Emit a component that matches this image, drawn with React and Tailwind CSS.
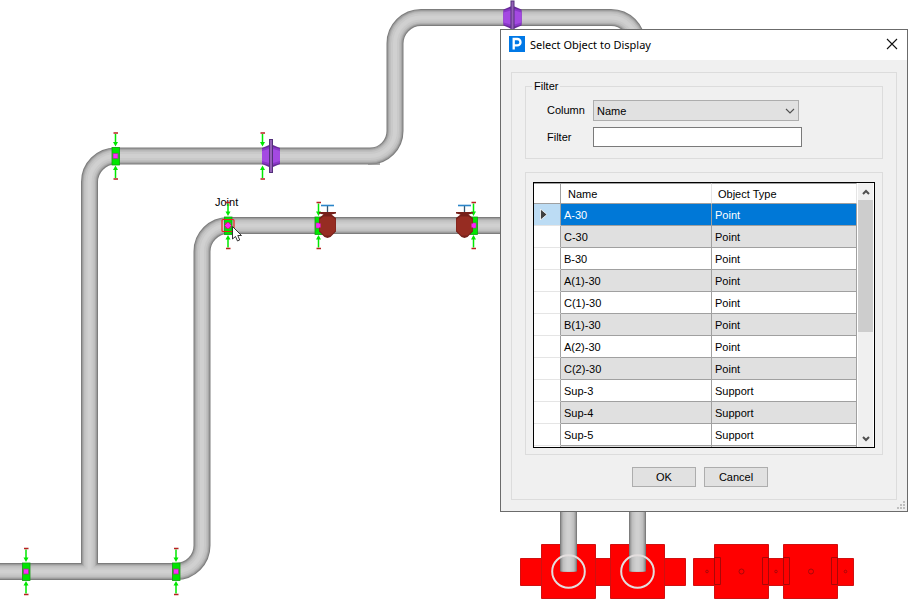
import React from "react";

const pipes = [
  "M89.5 571.5 V182 A26 26 0 0 1 115.5 156 H370 A25 25 0 0 0 395 131 V43.5 A26 26 0 0 1 421 17.5 H611 A26 26 0 0 1 637 43.5",
  "M-2 571.5 H176 A26 26 0 0 0 202 545.5 V251.5 A26 26 0 0 1 228 225.5 H520",
  "M568.5 500 V571.5",
  "M637.5 500 V571.5",
];

const shades = [
  { width: 17, color: "#7d7d7d" },
  { width: 15, color: "#9c9c9c" },
  { width: 13, color: "#b0b0b0" },
  { width: 11, color: "#bfbfbf" },
  { width: 8, color: "#c9c9c9" },
  { width: 4, color: "#d0d0d0" },
];

function Arrows({ x, y }) {
  return (
    <g transform={`translate(${x} ${y})`}>
      <path d="M0 -22 V-12 M0 22 V12" stroke="#00e800" strokeWidth="1.5" />
      <path d="M-2.5 -14 H2.5 L0 -9.5 Z M-2.5 14 H2.5 L0 9.5 Z" fill="#00e800" />
      <path d="M-2 -23 H2.5 M-2 23 H2.5" stroke="#b82020" strokeWidth="1.3" />
    </g>
  );
}

function Clamp({ x, y }) {
  return (
    <g>
      <Arrows x={x} y={y} />
      <g transform={`translate(${x} ${y})`}>
        <rect x="-3.5" y="-8.5" width="7.5" height="17.5" fill="#00e600" stroke="#10a010" strokeWidth="0.8" />
        <rect x="-2.5" y="-2.5" width="5" height="5" fill="#ff2aff" stroke="#8d4a7d" strokeWidth="0.8" />
      </g>
    </g>
  );
}

function Flange({ x, y }) {
  return (
    <g transform={`translate(${x} ${y})`}>
      <path d="M-9 -8 L-2 -11 H2 L9 -8 V8 L2 11 H-2 L-9 8 Z" fill="#6a2a9c" />
      <path d="M-9 -7 L-2 -9 H2 L9 -7 V7 L2 9 H-2 L-9 7 Z" fill="#8a38c8" />
      <path d="M-9 -5 L-2 -7 H2 L9 -5 V5 L2 7 H-2 L-9 5 Z" fill="#a449e2" />
      <rect x="-1.5" y="-16.5" width="3" height="33" fill="#9560b8" stroke="#53307a" strokeWidth="1" />
    </g>
  );
}

function Valve({ x, y }) {
  return (
    <g transform={`translate(${x} ${y})`}>
      <path d="M0 -20 V-12" stroke="#35556d" strokeWidth="1.3" />
      <path d="M-6.5 -20 H6.5" stroke="#2b85c9" strokeWidth="1.6" />
      <path d="M-8.5 -13.5 H8.5 V-12 L4 -11 L8.5 -7.5 V6 L3 11.5 L0 12.5 L-3 11.5 L-8.5 6 V-7.5 L-4 -11 L-8.5 -12 Z" fill="#76201a" />
      <path d="M-8 -6 L-4 -9 H4 L8 -6 V5 L3 10 H-3 L-8 5 Z" fill="#962c22" />
    </g>
  );
}

function Drawing() {
  return (
    <svg className="absolute inset-0 h-full w-full" aria-hidden="true" fill="none">
      <g fill="#ff0000" stroke="#d01010" strokeWidth="1">
        <path d="M520.5 558.5 h21 v27 h-21 Z M595.5 558.5 h16 v27 h-16 Z M664.5 558.5 h21 v27 h-21 Z" />
        <path d="M541.5 544.5 h54 v54 h-54 Z M610.5 544.5 h54 v54 h-54 Z" />
        <path d="M693.5 558.5 h21 v27 h-21 Z M768.5 558.5 h16 v27 h-16 Z M837.5 558.5 h16 v27 h-16 Z" />
        <path d="M714.5 544.5 h54 v54 h-54 Z M783.5 544.5 h54 v54 h-54 Z" />
        <path d="M714.5 557.5 h6 v27 h-6 Z M762.5 557.5 h6 v27 h-6 Z M783.5 557.5 h6 v27 h-6 Z M831.5 557.5 h6 v27 h-6 Z" stroke="#a80808" />
        <g stroke="#a80808">
          <circle cx="741.5" cy="571.5" r="2.5" />
          <circle cx="811" cy="571.5" r="2.5" />
          <circle cx="707" cy="571.5" r="1.3" />
          <circle cx="776" cy="571.5" r="1.3" />
          <circle cx="845.5" cy="571.5" r="1.3" />
        </g>
      </g>
      {shades.map((s) => (
        <g key={s.width} stroke={s.color} strokeWidth={s.width}>
          {pipes.map((d) => (
            <path key={d} d={d} />
          ))}
        </g>
      ))}
      <path d="M368 164 H380" stroke="#8c8c8c" strokeWidth="1.5" />
      <circle cx="568.5" cy="571.5" r="16.3" stroke="#e3dede" strokeWidth="2" />
      <circle cx="637.5" cy="571.5" r="16.3" stroke="#e3dede" strokeWidth="2" />
      <Flange x={512.5} y={17.5} />
      <Arrows x={262.5} y={156} />
      <Flange x={271} y={156} />
      <Clamp x={115.5} y={156} />
      <Clamp x={26} y={571.5} />
      <Clamp x={176} y={571.5} />
      <Clamp x={318.5} y={225.5} />
      <Valve x={327.5} y={225.5} />
      <Clamp x={473.5} y={225.5} />
      <Valve x={464.5} y={225.5} />
      <rect x="316.5" y="223.5" width="4" height="4" fill="#ff20ff" />
      <rect x="471.5" y="223.5" width="4" height="4" fill="#ff20ff" />
      <text x="215" y="206" fill="#000000" className="font-['Liberation_Sans',Arial,sans-serif] text-[11px]">
        Joint
      </text>
      <Clamp x={228} y={225.5} />
      <path d="M228 222 L231.5 225.5 L228 229 L224.5 225.5 Z" fill="#ff20ff" stroke="#e01818" strokeWidth="0.6" />
      <rect x="222" y="219.5" width="12" height="12" rx="1" stroke="#e82020" strokeWidth="1.2" />
      <path d="M232.5 226.5 V239 L235.5 236.5 L237.5 241 L239.7 240 L237.8 235.5 H241.5 Z" fill="#ffffff" stroke="#222222" strokeWidth="0.9" />
    </svg>
  );
}

const rows = [
  ["A-30", "Point"],
  ["C-30", "Point"],
  ["B-30", "Point"],
  ["A(1)-30", "Point"],
  ["C(1)-30", "Point"],
  ["B(1)-30", "Point"],
  ["A(2)-30", "Point"],
  ["C(2)-30", "Point"],
  ["Sup-3", "Support"],
  ["Sup-4", "Support"],
  ["Sup-5", "Support"],
];

function rowColor(i) {
  if (i === 0) return "bg-[#0078d7] text-white";
  return i % 2 ? "bg-[#e0e0e0]" : "bg-white";
}

function ObjectTable() {
  return (
    <div className="flex h-[266px] overflow-hidden border border-black bg-white">
      <div className="min-w-0 flex-1 overflow-hidden">
        <table className="w-full table-fixed border-separate border-spacing-0 text-left">
          <colgroup>
            <col className="w-[27px]" />
            <col className="w-[151px]" />
            <col />
          </colgroup>
          <thead>
            <tr className="h-[21px]">
              <th className="border-t border-r border-b border-[#a0a0a0] p-0" aria-label="Current row" />
              <th className="border-t border-r border-b border-[#a0a0a0] border-r-[#e5e5e5] p-0 pt-[2px] pl-[7px] font-normal">Name</th>
              <th className="border-t border-r border-b border-[#a0a0a0] border-r-[#e5e5e5] p-0 pt-[2px] pl-[6px] font-normal">Object Type</th>
            </tr>
          </thead>
          <tbody>
            {rows.map(([name, type], i) => (
              <tr key={name} className="h-[22px]">
                <td className={`border-r border-b border-r-[#a0a0a0] border-b-[#e5e5e5] p-0 pl-[6px] ${i === 0 ? "bg-[#bcdcf4]" : "bg-white"}`}>
                  {i === 0 && (
                    <svg className="block" width="8" height="11" viewBox="0 0 8 11" aria-hidden="true">
                      <path d="M0.5 0 L7 5.5 L0.5 11 Z" fill="#404040" stroke="#ffffff" strokeWidth="0.8" />
                    </svg>
                  )}
                </td>
                <td className={`border-r border-b border-[#a0a0a0] p-0 pt-[2px] pl-[3px] ${rowColor(i)}`}>{name}</td>
                <td className={`border-r border-b border-[#a0a0a0] p-0 pt-[2px] pl-[3px] ${rowColor(i)}`}>{type}</td>
              </tr>
            ))}
            <tr className="h-[22px]">
              <td className="border-r border-[#a0a0a0] bg-white p-0" />
              <td className="border-r border-[#a0a0a0] bg-[#e0e0e0] p-0" />
              <td className="border-r border-[#a0a0a0] bg-[#e0e0e0] p-0" />
            </tr>
          </tbody>
        </table>
      </div>
      <div className="mr-px ml-px flex w-[15px] flex-col bg-[#f0f0f0]">
        <button type="button" aria-label="Scroll up" className="flex h-[17px] items-center justify-center">
          <svg width="8" height="6" viewBox="0 0 8 6" fill="none">
            <path d="M1 5 L4 2 L7 5" stroke="#505050" strokeWidth="2" />
          </svg>
        </button>
        <div className="h-[132px] bg-[#cdcdcd]" />
        <div className="flex-1" />
        <button type="button" aria-label="Scroll down" className="flex h-[17px] items-center justify-center">
          <svg width="8" height="6" viewBox="0 0 8 6" fill="none">
            <path d="M1 1 L4 4 L7 1" stroke="#505050" strokeWidth="2" />
          </svg>
        </button>
      </div>
    </div>
  );
}

function SelectDialog() {
  return (
    <section
      role="dialog"
      aria-labelledby="dialog-title"
      className="absolute top-[29px] left-[500px] w-[408px] border border-[#6b6b6b] bg-[#f0f0f0] font-['Liberation_Sans',Arial,sans-serif] text-[11px] leading-[13px] text-black"
    >
      <header className="flex h-[30px] items-center bg-white pr-[9px] pb-[2px] pl-2">
        <svg width="16" height="16" viewBox="0 0 16 16" aria-hidden="true">
          <rect width="16" height="16" fill="#0078e6" />
          <path d="M4.7 13.5 V3 H8.3 A3.2 3.2 0 0 1 8.3 9.4 H4.7" fill="none" stroke="#ffffff" strokeWidth="2.3" />
        </svg>
        <h1 id="dialog-title" className="ml-[5px] flex-1 font-['Noto_Sans','Open_Sans',sans-serif] text-[11px]">
          Select Object to Display
        </h1>
        <button type="button" aria-label="Close">
          <svg width="12" height="12" viewBox="0 0 12 12">
            <path d="M1 1 L11 11 M11 1 L1 11" stroke="#111111" strokeWidth="1.1" />
          </svg>
        </button>
      </header>
      <div className="px-[10px] pt-3 pb-[11px]">
        <div className="border border-[#dcdcdc] px-[13px] pt-[7px] pb-3">
          <fieldset className="border border-[#dcdcdc] px-[21px] pt-[7px] pb-[11px]">
            <legend className="-ml-[15px] px-[2px]">Filter</legend>
            <div className="grid grid-cols-[46px_1fr] items-center gap-y-[6px]">
              <label htmlFor="column">Column</label>
              <div className="relative w-[206px]">
                <select id="column" className="block h-[21px] w-full appearance-none rounded-none border border-[#adadad] bg-[#e1e1e1] px-[3px] pt-px">
                  <option>Name</option>
                </select>
                <svg className="pointer-events-none absolute top-[8px] right-[4px]" width="10" height="6" viewBox="0 0 10 6" fill="none">
                  <path d="M1 1 L5 5 L9 1" stroke="#505050" strokeWidth="1.1" />
                </svg>
              </div>
              <label htmlFor="filter">Filter</label>
              <input id="filter" type="text" className="h-5 w-[209px] border border-[#7a7a7a] bg-white px-1" />
            </div>
          </fieldset>
          <div className="mt-[13px] border border-[#dcdcdc] px-[7px] pt-[9px] pb-[6px]">
            <ObjectTable />
          </div>
          <div className="mt-3 flex justify-center gap-2 pr-[15px] pl-[7px]">
            <button type="button" className="h-5 w-16 border border-[#adadad] bg-[#e1e1e1]">OK</button>
            <button type="button" className="h-5 w-16 border border-[#adadad] bg-[#e1e1e1]">Cancel</button>
          </div>
        </div>
      </div>
      <svg className="absolute right-[2px] bottom-[2px]" width="8" height="8" viewBox="0 0 8 8" fill="#bfbfbf" aria-hidden="true">
        <path d="M6 0h2v2h-2z M3 3h2v2h-2z M6 3h2v2h-2z M0 6h2v2h-2z M3 6h2v2h-2z M6 6h2v2h-2z" />
      </svg>
    </section>
  );
}

export default function App() {
  return (
    <main className="relative min-h-screen overflow-hidden bg-white">
      <Drawing />
      <SelectDialog />
    </main>
  );
}
